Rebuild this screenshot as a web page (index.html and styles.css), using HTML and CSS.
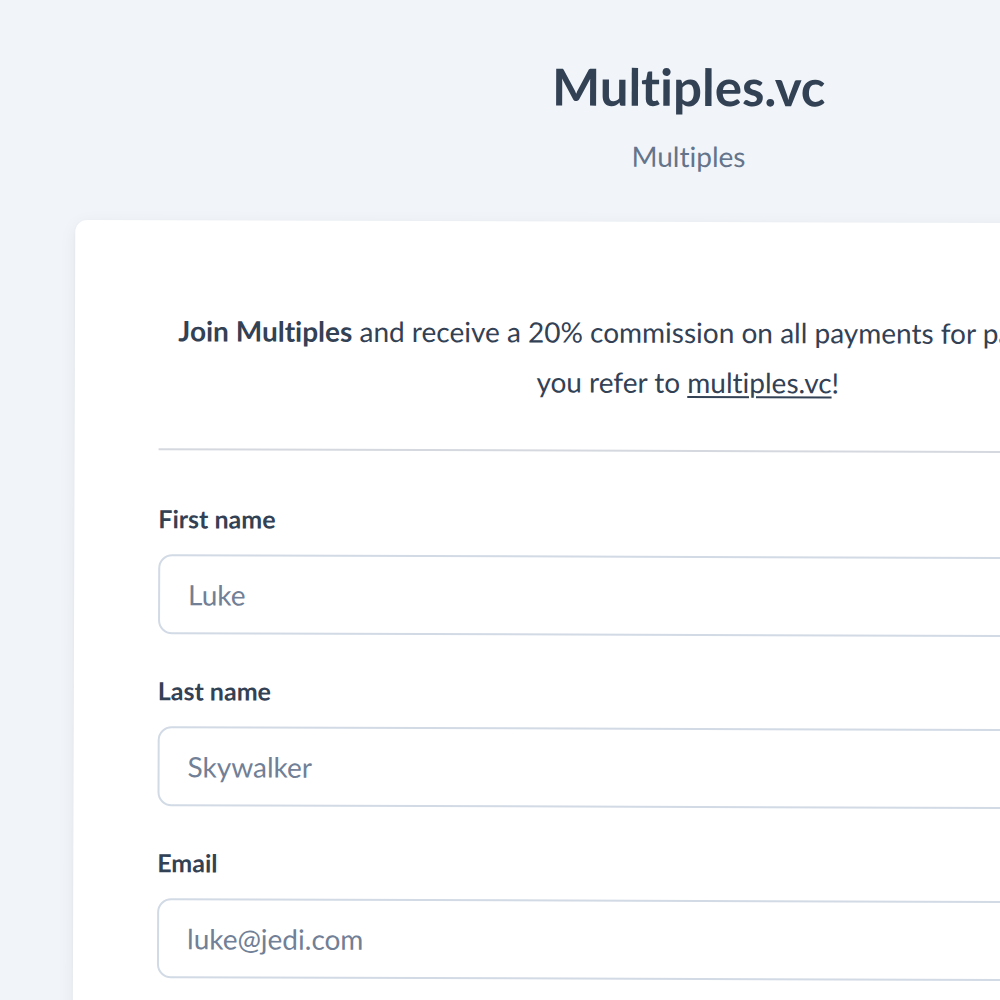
FILE: index.html
```html
<!DOCTYPE html>
<html lang="en">
<head>
<meta charset="utf-8">
<title>Multiples.vc</title>
<link rel="stylesheet" href="styles.css">
</head>
<body>
<div class="page">
  <header class="brand">
    <h1 class="brand-title">Multiples.vc</h1>
    <p class="brand-sub">Multiples</p>
  </header>
  <main class="card">
    <p class="intro"><strong>Join Multiples</strong> and receive a 20% commission on all payments for paying customers you refer to <a class="intro-link" href="#">multiples.vc</a>!</p>
    <hr class="divider">
    <form class="form">
      <div class="field">
        <label class="field-label" for="first">First name</label>
        <input class="field-input" id="first" type="text" placeholder="Luke">
      </div>
      <div class="field">
        <label class="field-label" for="last">Last name</label>
        <input class="field-input" id="last" type="text" placeholder="Skywalker">
      </div>
      <div class="field">
        <label class="field-label" for="email">Email</label>
        <input class="field-input" id="email" type="email" placeholder="luke@jedi.com">
      </div>
    </form>
  </main>
</div>
</body>
</html>
```
FILE: styles.css
```css
html, body {
  margin: 0;
  padding: 0;
  overflow: hidden;
  background: #f1f5f9;
}

body {
  font-family: Lato, "Noto Sans", sans-serif;
  color: #334155;
  width: 1000px;
  height: 1000px;
}

.page {
  width: 1226px;
  margin-left: 76px;
  padding-top: 54px;
  display: flex;
  flex-direction: column;
  transform: rotate(0.18deg);
  transform-origin: 0 0;
}

.brand {
  display: flex;
  flex-direction: column;
  align-items: center;
}

.brand-title {
  margin: 0;
  font-size: 51px;
  line-height: 62px;
  font-weight: 700;
  color: #334155;
  font-variant-ligatures: none;
}

.brand-sub {
  margin: 23px 0 0;
  font-size: 28px;
  line-height: 30px;
  color: #64748b;
  font-variant-ligatures: none;
}

.card {
  margin-top: 51px;
  background: #ffffff;
  border-radius: 12px;
  padding: 85px 84px 60px;
  box-shadow: 0 4px 18px rgba(15, 23, 42, 0.06), 0 1px 3px rgba(15, 23, 42, 0.04);
}

.intro {
  margin: 0;
  text-align: center;
  font-size: 28px;
  line-height: 50px;
  color: #334155;
  font-variant-ligatures: none;
}

.intro strong {
  font-weight: 700;
}

.intro-link {
  color: #334155;
  text-decoration: underline;
  text-underline-offset: 3px;
  text-decoration-thickness: 2px;
}

.divider {
  margin: 43px 0 0;
  border: 0;
  height: 2px;
  background: #d5d9df;
}

.form {
  margin-top: 52px;
  display: flex;
  flex-direction: column;
  gap: 40px;
}

.field {
  display: flex;
  flex-direction: column;
}

.field-label {
  font-size: 25px;
  line-height: 32px;
  font-weight: 700;
  color: #334155;
  margin-bottom: 20px;
}

.field-input {
  box-sizing: border-box;
  width: 100%;
  height: 80px;
  border: 2px solid #d2dae5;
  border-radius: 14px;
  padding: 0 28px;
  font-family: Lato, "Noto Sans", sans-serif;
  font-size: 28px;
  color: #334155;
  background: #ffffff;
  outline: none;
}

.field-input::placeholder {
  color: #718096;
  opacity: 1;
}
```
